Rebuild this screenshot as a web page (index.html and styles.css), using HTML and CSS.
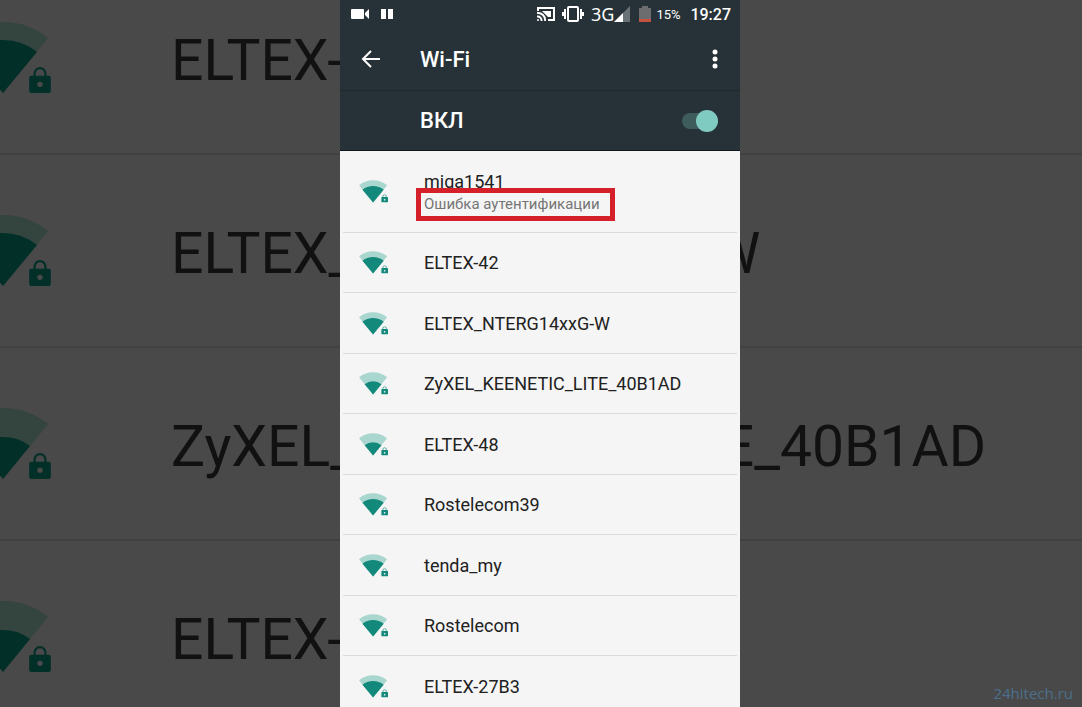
FILE: index.html
```
<!DOCTYPE html>
<html lang="ru">
<head>
    <meta charset="UTF-8">
    <meta name="viewport" content="width=device-width, initial-scale=1.0">
    <title>Wi-Fi</title>
    <link rel="stylesheet" href="styles.css">
</head>
<body>
    <!-- shared icons -->
    <svg class="sprite" aria-hidden="true">
        <symbol id="lock" viewBox="0 0 20 24">
            <path d="M5 9V6a5 5 0 0 1 10 0v3" fill="none" stroke="currentColor" stroke-width="2"/>
            <path fill-rule="evenodd" fill="currentColor" d="M2 8h16a2 2 0 0 1 2 2v12a2 2 0 0 1-2 2H2a2 2 0 0 1-2-2V10a2 2 0 0 1 2-2zm8 5.500a2.500 2.500 0 1 0 0 5 2.500 2.500 0 0 0 0-5z"/>
        </symbol>
        <symbol id="wifi-3" viewBox="0 0 96 72">
            <path class="wifi-weak" d="M45 71L0 16Q20 0 45 0T90 16z"/>
            <path class="wifi-strong" d="M45 71L11 30Q26 18 45 18T79 30z"/>
            <use href="#lock" x="71" y="45" width="22" height="26"/>
        </symbol>
        <symbol id="wifi-2" viewBox="0 0 96 72">
            <path class="wifi-weak" d="M45 71L0 16Q20 0 45 0T90 16z"/>
            <path class="wifi-strong" d="M45 71L18 38Q30 29 45 29T72 38z"/>
            <use href="#lock" x="71" y="45" width="22" height="26"/>
        </symbol>
    </svg>

    <div class="backdrop" aria-hidden="true">
        <div class="backdrop-row"><svg><use href="#wifi-3"/></svg><span>ELTEX-42</span></div>
        <div class="backdrop-row"><svg><use href="#wifi-3"/></svg><span>ELTEX_NTERG14xxG-W</span></div>
        <div class="backdrop-row"><svg><use href="#wifi-2"/></svg><span>ZyXEL_KEENETIC_LITE_40B1AD</span></div>
        <div class="backdrop-row"><svg><use href="#wifi-2"/></svg><span>ELTEX-48</span></div>
    </div>

    <main class="phone">
        <header class="header">
            <div class="status">
                <svg width="20" height="12" viewBox="0 0 20 12" fill="#fff">
                    <rect y="1" width="13" height="10" rx="1"/>
                    <path d="M14 5l4-4v10l-4-4z"/>
                </svg>
                <svg class="pause" width="12" height="12" viewBox="0 0 12 12" fill="#fff">
                    <path d="M0 1h5v10H0zM7 1h5v10H7z"/>
                </svg>
                <svg class="cast" width="18" height="14" viewBox="0 0 18 14" fill="none" stroke="#fff" stroke-width="2">
                    <path d="M1 4V1h16v12h-6"/>
                    <path d="M5 4h9v6h-3z" fill="#fff" stroke="none"/>
                    <path d="M0 6a7 7 0 0 1 8 8M0 9.500a4 4 0 0 1 4.500 4.500"/>
                    <circle cx="1" cy="13" r="1" fill="#fff" stroke="none"/>
                </svg>
                <svg class="vibrate" width="22" height="16" viewBox="0 0 22 16" fill="none" stroke="#fff" stroke-width="2">
                    <rect x="6" y="1" width="10" height="14" rx="1"/>
                    <path d="M3 3v10M19 3v10M1 6v4M21 6v4"/>
                </svg>
                <span class="mobile">3G</span>
                <svg width="16" height="16" viewBox="0 0 16 16">
                    <path d="M0 16L16 0v16z" fill="#6b7275"/>
                    <path d="M0 16L9 7v9z" fill="#fff"/>
                </svg>
                <svg class="battery" width="12" height="16" viewBox="0 0 12 16">
                    <path d="M0 2h3V0h6v2h3v14H0z" fill="#6b6d6e"/>
                    <path d="M0 13h12v3H0z" fill="#c5523f"/>
                </svg>
                <span class="percent">15%</span>
                <time class="clock">19:27</time>
            </div>
            <div class="toolbar">
                <button class="icon-button" aria-label="Назад">
                    <svg width="20" height="18" viewBox="0 0 20 18" fill="none" stroke="#fff" stroke-width="2">
                        <path d="M10 1L2 9l8 8M2 9h17"/>
                    </svg>
                </button>
                <h1 class="title">Wi-Fi</h1>
                <button class="icon-button" aria-label="Меню">
                    <svg width="6" height="20" viewBox="0 0 6 20" fill="#fff">
                        <circle cx="3" cy="3" r="2.500"/>
                        <circle cx="3" cy="10" r="2.500"/>
                        <circle cx="3" cy="17" r="2.500"/>
                    </svg>
                </button>
            </div>
            <div class="switch-bar">
                <label class="title" for="wifi-switch">ВКЛ</label>
                <input class="switch" type="checkbox" id="wifi-switch" checked>
            </div>
        </header>

        <ul class="networks">
            <li class="network failed">
                <svg class="signal"><use href="#wifi-3"/></svg>
                <div class="info">
                    <div class="name">miga1541</div>
                    <div class="error">Ошибка аутентификации</div>
                </div>
            </li>
            <li class="network"><svg class="signal"><use href="#wifi-3"/></svg><span class="name">ELTEX-42</span></li>
            <li class="network"><svg class="signal"><use href="#wifi-3"/></svg><span class="name">ELTEX_NTERG14xxG-W</span></li>
            <li class="network"><svg class="signal"><use href="#wifi-2"/></svg><span class="name">ZyXEL_KEENETIC_LITE_40B1AD</span></li>
            <li class="network"><svg class="signal"><use href="#wifi-2"/></svg><span class="name">ELTEX-48</span></li>
            <li class="network"><svg class="signal"><use href="#wifi-3"/></svg><span class="name">Rostelecom39</span></li>
            <li class="network"><svg class="signal"><use href="#wifi-3"/></svg><span class="name">tenda_my</span></li>
            <li class="network"><svg class="signal"><use href="#wifi-3"/></svg><span class="name">Rostelecom</span></li>
            <li class="network"><svg class="signal"><use href="#wifi-3"/></svg><span class="name">ELTEX-27B3</span></li>
        </ul>
    </main>

    <div class="watermark">24hitech.ru</div>
</body>
</html>
```
FILE: styles.css
```
* {
    margin: 0;
    padding: 0;
    box-sizing: border-box;
}
body {
    position: relative;
    height: 100vh;
    overflow: hidden;
    background-color: #494949;
    font-family: Roboto, "Noto Sans", sans-serif;
}
svg {
    flex-shrink: 0;
}
.sprite {
    position: absolute;
    width: 0;
    height: 0;
}
.wifi-weak {
    fill: var(--weak);
}
.wifi-strong {
    fill: currentColor;
}

/* enlarged list behind the phone */
.backdrop {
    --weak: #34443f;
    position: absolute;
    inset: 0;
    overflow: hidden;
    color: #111;
}
.backdrop-row {
    display: flex;
    align-items: center;
    gap: 117px;
    height: 193px;
    margin-left: -42px;
    border-bottom: 2px solid #414141;
    font-size: 57px;
    white-space: nowrap;
}
.backdrop-row:first-child {
    margin-top: -38px;
}
.backdrop-row span {
    padding-top: 6px;
}
.backdrop svg {
    width: 96px;
    height: 72px;
    color: #023029;
}

/* phone */
.phone {
    --weak: #a9d6cf;
    position: relative;
    width: 400px;
    height: 100%;
    margin: 0 auto;
    left: -1px;
    overflow: hidden;
    background-color: #f5f5f5;
}
.header {
    background-color: #263238;
    border-bottom: 1px solid #10171c;
    color: #fff;
}
.status {
    display: flex;
    align-items: center;
    height: 28px;
    padding: 0 9px 0 11px;
}
.pause {
    margin-left: 10px;
}
.cast {
    margin-left: auto;
}
.vibrate {
    margin: 0 7px;
}
.mobile {
    font-family: "Noto Sans", sans-serif;
    font-size: 18px;
}
.battery {
    margin: 0 5px 0 9px;
}
.percent {
    width: 34px;
    font-size: 13px;
}
.clock {
    font-size: 16px;
    font-weight: 500;
}
.toolbar {
    display: flex;
    align-items: center;
    height: 62px;
    padding: 0 14px 0 20px;
}
.icon-button {
    display: flex;
    align-items: center;
    justify-content: center;
    min-width: 22px;
    height: 40px;
    border: none;
    background: none;
    cursor: pointer;
}
.title {
    flex: 1;
    font-size: 22px;
    font-weight: 500;
}
.toolbar .title {
    margin-left: 38px;
}
.switch-bar {
    display: flex;
    align-items: center;
    height: 60px;
    padding: 0 22px 0 80px;
    border-top: 1px solid #1f2a2f;
}
.switch {
    appearance: none;
    display: flex;
    align-items: center;
    justify-content: flex-end;
    width: 36px;
    height: 16px;
    border-radius: 8px;
    background-color: #3f5c5d;
    cursor: pointer;
}
.switch::before {
    content: "";
    width: 22px;
    height: 22px;
    flex-shrink: 0;
    border-radius: 50%;
    background-color: #80cbc1;
}

/* network list */
.networks {
    list-style: none;
    padding: 0 3px;
}
.network {
    display: flex;
    align-items: center;
    gap: 35px;
    height: 60px;
    padding-left: 16px;
    border-bottom: 1px solid #dadada;
}
.network:nth-child(odd) {
    height: 61px;
}
.network.failed {
    height: 82px;
}
.signal {
    width: 30px;
    height: 23px;
    color: #12897b;
}
.info {
    padding-top: 9px;
}
.name {
    color: #212121;
    font-size: 18px;
}
.error {
    position: relative;
    margin: -4px 0 0 -8px;
    padding: 0 10px 0 3px;
    border: 5px solid #d5202a;
    background-color: #f5f5f5;
    color: #757575;
    font-size: 15px;
    line-height: 23px;
}
.watermark {
    position: absolute;
    right: 9px;
    bottom: 4px;
    color: #4b708c;
    font-family: "Open Sans", sans-serif;
    font-size: 15px;
}
```
